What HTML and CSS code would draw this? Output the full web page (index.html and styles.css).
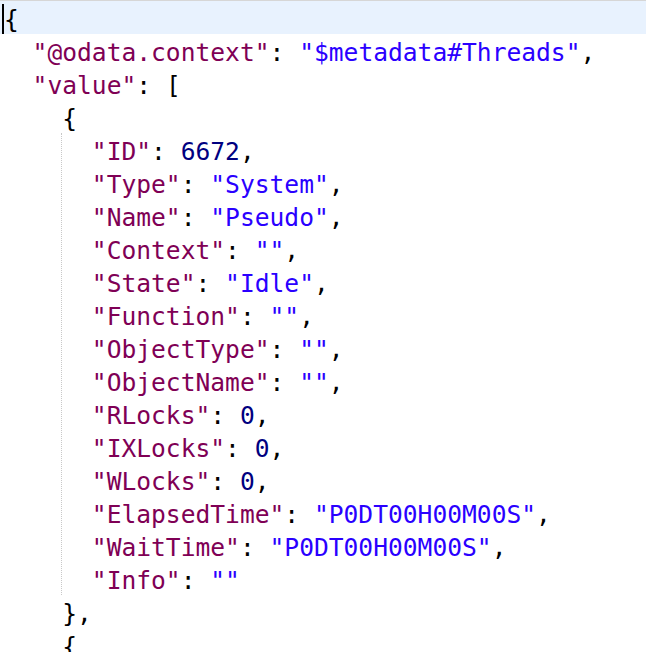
FILE: index.html
```html
<!DOCTYPE html>
<html>
<head>
<meta charset="utf-8">
<link rel="stylesheet" href="styles.css">
</head>
<body>
<div class="editor">
  <div class="line current"><span class="caret"></span><span class="p">{</span></div>
  <div class="line i1"><span class="k">"@odata.context"</span><span class="p">: </span><span class="s">"$metadata#Threads"</span><span class="p">,</span></div>
  <div class="line i1"><span class="k">"value"</span><span class="p">: [</span></div>
  <div class="line i2"><span class="p">{</span></div>
  <div class="block">
    <div class="line"><span class="k">"ID"</span><span class="p">: </span><span class="n">6672</span><span class="p">,</span></div>
    <div class="line"><span class="k">"Type"</span><span class="p">: </span><span class="s">"System"</span><span class="p">,</span></div>
    <div class="line"><span class="k">"Name"</span><span class="p">: </span><span class="s">"Pseudo"</span><span class="p">,</span></div>
    <div class="line"><span class="k">"Context"</span><span class="p">: </span><span class="s">""</span><span class="p">,</span></div>
    <div class="line"><span class="k">"State"</span><span class="p">: </span><span class="s">"Idle"</span><span class="p">,</span></div>
    <div class="line"><span class="k">"Function"</span><span class="p">: </span><span class="s">""</span><span class="p">,</span></div>
    <div class="line"><span class="k">"ObjectType"</span><span class="p">: </span><span class="s">""</span><span class="p">,</span></div>
    <div class="line"><span class="k">"ObjectName"</span><span class="p">: </span><span class="s">""</span><span class="p">,</span></div>
    <div class="line"><span class="k">"RLocks"</span><span class="p">: </span><span class="n">0</span><span class="p">,</span></div>
    <div class="line"><span class="k">"IXLocks"</span><span class="p">: </span><span class="n">0</span><span class="p">,</span></div>
    <div class="line"><span class="k">"WLocks"</span><span class="p">: </span><span class="n">0</span><span class="p">,</span></div>
    <div class="line"><span class="k">"ElapsedTime"</span><span class="p">: </span><span class="s">"P0DT00H00M00S"</span><span class="p">,</span></div>
    <div class="line"><span class="k">"WaitTime"</span><span class="p">: </span><span class="s">"P0DT00H00M00S"</span><span class="p">,</span></div>
    <div class="line"><span class="k">"Info"</span><span class="p">: </span><span class="s">""</span></div>
  </div>
  <div class="line i2"><span class="p">},</span></div>
  <div class="line i2"><span class="p">{</span></div>
</div>
</body>
</html>
```

FILE: styles.css
```css
html, body {
  margin: 0;
  padding: 0;
  background: #ffffff;
  overflow: hidden;
}

.editor {
  border-top: 1px solid #d6d6d6;
  font-family: "DejaVu Sans Mono", "Liberation Mono", monospace;
  font-size: 24.6px;
  line-height: 33px;
  color: #000000;
  padding-left: 3px;
}

.line {
  height: 33px;
  box-sizing: border-box;
  padding-top: 2px;
  white-space: pre;
  position: relative;
}

.current {
  background: #e8f2fe;
  margin-left: -3px;
  padding-left: 4px;
}

.caret {
  position: absolute;
  left: 2px;
  top: 3px;
  width: 2px;
  height: 30px;
  background: #000000;
}

.i1 { padding-left: 2ch; }
.i2 { padding-left: 4ch; }

.block {
  margin-left: calc(4ch - 1px);
  border-left: 1px dotted #c8c8c8;
}

.block .line {
  padding-left: 2ch;
}

.k { color: #7f0055; }
.s { color: #2a00ff; }
.n { color: #000080; }
.p { color: #000000; }
```
